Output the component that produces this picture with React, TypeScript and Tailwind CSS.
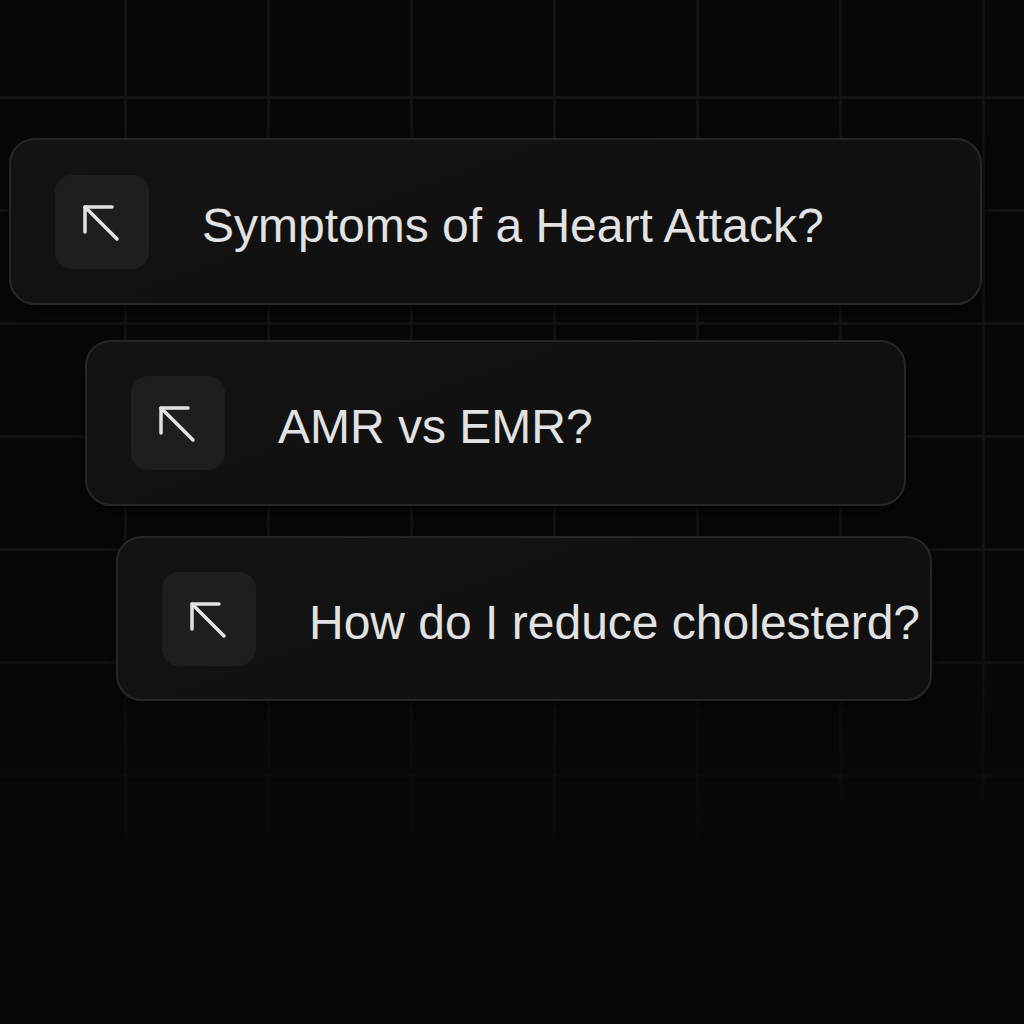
import React from 'react';

interface Question {
  text: string;
  offset: string;
}

const questions: Question[] = [
  { text: 'Symptoms of a Heart Attack?', offset: 'mt-[138px] ml-[9px] w-[973px] h-[167px]' },
  { text: 'AMR vs EMR?', offset: 'mt-[35px] ml-[85px] w-[821px] h-[166px]' },
  { text: 'How do I reduce cholesterd?', offset: 'mt-[30px] ml-[116px] w-[816px] h-[165px]' },
];

const ArrowUpLeft = () => (
  <svg width="38" height="38" viewBox="0 0 38 38" fill="none" className="translate-x-[-1px] translate-y-[1px]">
    <path d="M3 28V3h27" stroke="#e2e2e2" strokeWidth="3.5" strokeLinecap="round" strokeLinejoin="round" />
    <path d="M3 3l32 32" stroke="#e2e2e2" strokeWidth="3.5" strokeLinecap="round" />
  </svg>
);

const QuestionCard: React.FC<Question> = ({ text, offset }) => (
  <div
    className={`${offset} flex items-center pl-[44px] rounded-[26px] border-2 border-[#262626] bg-[linear-gradient(160deg,#131313,#0f0f0f)] shadow-[0_6px_16px_rgba(0,0,0,0.6)]`}
  >
    <div className="w-[94px] h-[94px] rounded-[17px] bg-[#1e1e1e] flex items-center justify-center shrink-0">
      <ArrowUpLeft />
    </div>
    <span className="ml-[53px] mt-2 text-[48px] text-[#e2e2e2] font-['Liberation_Sans',Arial,sans-serif] whitespace-nowrap">
      {text}
    </span>
  </div>
);

export default function App() {
  return (
    <div className="relative w-[1024px] h-[1024px] overflow-hidden bg-[#080808]">
      <div className="absolute inset-0 bg-[linear-gradient(to_right,#131313_3px,transparent_3px),linear-gradient(to_bottom,#131313_3px,transparent_3px)] bg-[size:143px_113px] bg-[position:124px_96px] [mask-image:linear-gradient(to_bottom,black_55%,transparent_88%)]" />
      <div className="relative flex flex-col items-start">
        {questions.map((q) => (
          <QuestionCard key={q.text} {...q} />
        ))}
      </div>
    </div>
  );
}
